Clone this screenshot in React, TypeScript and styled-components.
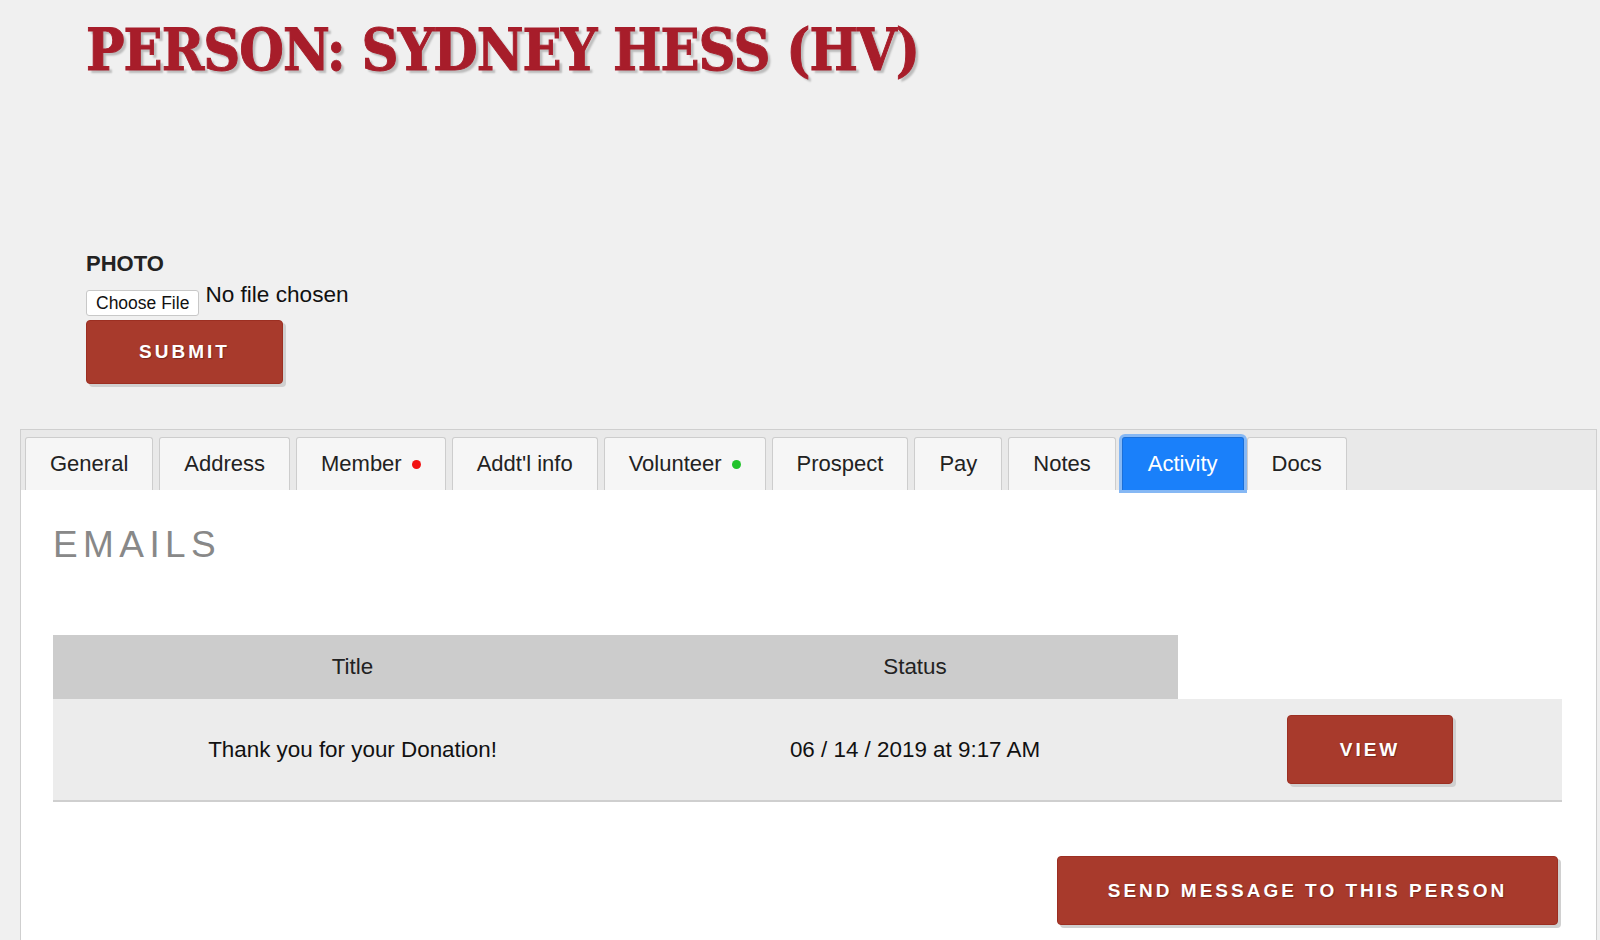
import React from 'react';
import styled, { createGlobalStyle } from 'styled-components';

const GlobalStyle = createGlobalStyle`
    html, body {
        margin: 0;
        padding: 0;
        background: #f0f0f0;
        font-family: "Liberation Sans", Arial, sans-serif;
        color: #222;
        overflow: hidden;
    }
`

const Page = styled.div`
    display: flex;
    flex-direction: column;
`

const Header = styled.div`
    padding-left: 86px;
    display: flex;
    flex-direction: column;
`

const Title = styled.h1`
    margin: 14px 0 0 0;
    height: 72px;
    font-family: "DejaVu Serif Condensed", "DejaVu Serif", serif;
    font-stretch: condensed;
    font-weight: bold;
    font-size: 57px;
    line-height: 72px;
    letter-spacing: -1px;
    color: #a71d2a;
    -webkit-text-stroke: 0.9px #a71d2a;
    text-shadow: 3px 3px 2px rgba(0, 0, 0, 0.22);
`

const PhotoForm = styled.form`
    margin-top: 165px;
    display: flex;
    flex-direction: column;
    align-items: flex-start;
`

const Label = styled.label`
    font-size: 22px;
    font-weight: bold;
    color: #222;
`

const FileRow = styled.div`
    margin-top: 5px;
    display: flex;
    align-items: flex-start;
    gap: 6px;
`

const ChooseButton = styled.span`
    margin-top: 8px;
    height: 24px;
    padding: 0 9px;
    display: flex;
    align-items: center;
    background: #fff;
    border: 1px solid #c8c8c8;
    border-radius: 3px;
    font-size: 17.5px;
    color: #111;
`

const NoFile = styled.span`
    font-size: 22.6px;
    color: #111;
`

interface BtnProps {
    $w: number;
}

const RedButton = styled.button<BtnProps>`
    width: ${(p) => p.$w}px;
    height: 65px;
    background: #a83a2c;
    border: 1px solid #9c2f22;
    border-radius: 4px;
    box-shadow: 3px 3px 0 #d0d0d0;
    color: #fff;
    font-family: "Liberation Sans", Arial, sans-serif;
    font-weight: bold;
    font-size: 19px;
    letter-spacing: 3px;
    text-shadow: 1px 1px 1px rgba(0, 0, 0, 0.3);
    cursor: pointer;
`

const SubmitButton = styled(RedButton)`
    margin-top: 4px;
    height: 64px;
`

const TabsBox = styled.div`
    margin: 45px 3px 0 20px;
    border: 1px solid #cfcfcf;
    background: #e9e9e9;
    display: flex;
    flex-direction: column;
`

const TabBar = styled.div`
    display: flex;
    gap: 6px;
    padding: 7px 0 0 4px;
`

interface TabProps {
    $active?: boolean;
}

const Tab = styled.div<TabProps>`
    height: 52px;
    padding: 0 ${(p) => (p.$active ? 25 : 24)}px;
    margin-right: ${(p) => (p.$active ? -3 : 0)}px;
    display: flex;
    align-items: center;
    gap: 10px;
    font-size: 22px;
    color: ${(p) => (p.$active ? '#fff' : '#222')};
    background: ${(p) => (p.$active ? '#1a80fa' : '#f6f6f6')};
    border: 1px solid ${(p) => (p.$active ? '#1a6fd8' : '#cdcdcd')};
    border-bottom: none;
    border-radius: 3px 3px 0 0;
    box-shadow: ${(p) => (p.$active ? '0 0 0 3px #86b8f4' : 'none')};
    position: relative;
    z-index: ${(p) => (p.$active ? 2 : 1)};
`

const Dot = styled.span<{ $color: string }>`
    width: 9px;
    height: 9px;
    border-radius: 50%;
    background: ${(p) => p.$color};
`

const Panel = styled.div`
    background: #fff;
    padding: 34px 34px 40px 32px;
    display: flex;
    flex-direction: column;
`

const SectionTitle = styled.h2`
    margin: 0;
    font-size: 37px;
    font-weight: normal;
    letter-spacing: 5.4px;
    color: #888;
`

const Table = styled.table`
    margin-top: 69px;
    width: 100%;
    border-collapse: collapse;
    font-size: 22.4px;
`

const HeadCell = styled.th<{ $empty?: boolean }>`
    height: 64px;
    padding: 0;
    font-weight: normal;
    color: #222;
    background: ${(p) => (p.$empty ? 'transparent' : '#cccccc')};
`

const Row = styled.tr`
    background: #ececec;
    border-bottom: 2px solid #cfcfcf;
`

const Cell = styled.td`
    padding: 16px 0;
    text-align: center;
    color: #111;
`

const ViewButton = styled(RedButton)`
    height: 69px;
`

const Footer = styled.div`
    margin-top: 54px;
    display: flex;
    justify-content: flex-end;
    padding-right: 4px;
`

const SendButton = styled(RedButton)`
    height: 69px;
`

const tabs = [
    { name: 'General' },
    { name: 'Address' },
    { name: 'Member', dot: '#f21313' },
    { name: "Addt'l info" },
    { name: 'Volunteer', dot: '#22c32b' },
    { name: 'Prospect' },
    { name: 'Pay' },
    { name: 'Notes' },
    { name: 'Activity', active: true },
    { name: 'Docs' },
]

const App: React.FC = () => {
    return <Page>
        <GlobalStyle />
        <Header>
            <Title>PERSON: SYDNEY HESS (HV)</Title>
            <PhotoForm onSubmit={(e) => e.preventDefault()}>
                <Label>PHOTO</Label>
                <FileRow>
                    <ChooseButton>Choose File</ChooseButton>
                    <NoFile>No file chosen</NoFile>
                </FileRow>
                <SubmitButton $w={197} type="submit">SUBMIT</SubmitButton>
            </PhotoForm>
        </Header>
        <TabsBox>
            <TabBar>
                {tabs.map((t) => (
                    <Tab key={t.name} $active={t.active}>
                        {t.name}
                        {t.dot && <Dot $color={t.dot} />}
                    </Tab>
                ))}
            </TabBar>
            <Panel>
                <SectionTitle>EMAILS</SectionTitle>
                <Table>
                    <thead>
                        <tr>
                            <HeadCell style={{ width: 599 }}>Title</HeadCell>
                            <HeadCell style={{ width: 526 }}>Status</HeadCell>
                            <HeadCell $empty />
                        </tr>
                    </thead>
                    <tbody>
                        <Row>
                            <Cell>Thank you for your Donation!</Cell>
                            <Cell>06 / 14 / 2019 at 9:17 AM</Cell>
                            <Cell><ViewButton $w={166}>VIEW</ViewButton></Cell>
                        </Row>
                    </tbody>
                </Table>
                <Footer>
                    <SendButton $w={501}>SEND MESSAGE TO THIS PERSON</SendButton>
                </Footer>
            </Panel>
        </TabsBox>
    </Page>
}

export default App;
